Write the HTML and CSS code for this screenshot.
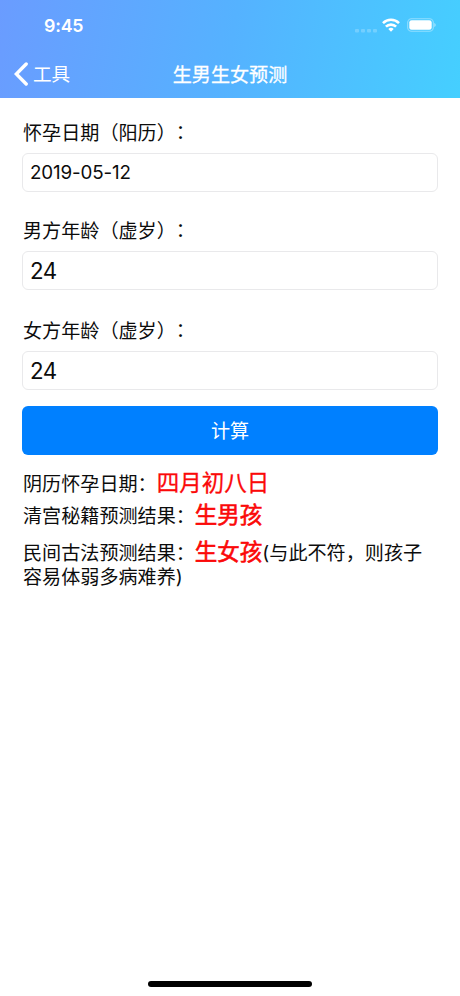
FILE: index.html
```html
<!DOCTYPE html>
<html lang="zh-CN">
<head>
<meta charset="utf-8">
<meta name="viewport" content="width=device-width">
<title>生男生女预测</title>
<link rel="stylesheet" href="styles.css">
</head>
<body>
<div class="screen">
  <header class="header">
    <div class="status">
      <span class="time">9:45</span>
      <div class="indicators">
        <svg class="signal" width="23" height="5" viewBox="0 0 23 5"><g fill="#fff" fill-opacity=".22"><rect x="0" y="1" width="4" height="3.5" rx="1"/><rect x="6" y="1" width="4" height="3.5" rx="1"/><rect x="12" y="1" width="4" height="3.5" rx="1"/><rect x="18" y="1" width="4" height="3.5" rx="1"/></g></svg>
        <svg class="wifi" width="18" height="14" viewBox="0 0 18 14"><g fill="none" stroke="#fff" stroke-width="2.6"><path d="M1 5.1a11.4 11.4 0 0 1 16 0"/><path d="M3.9 8.7a7.2 7.2 0 0 1 10.2 0"/></g><path d="M6.3 11a3.9 3.9 0 0 1 5.4 0L9 13.8z" fill="#fff"/></svg>
        <svg class="battery" width="29" height="14" viewBox="0 0 29 14"><rect x=".7" y=".7" width="25.6" height="12.6" rx="3.8" fill="none" stroke="#fff" stroke-opacity=".4" stroke-width="1.1"/><rect x="2.3" y="2.3" width="22.4" height="9.4" rx="2.3" fill="#fff"/><path d="M27.3 5v4q1.4-.6 1.4-2t-1.4-2" fill="#fff" fill-opacity=".5"/></svg>
      </div>
    </div>
    <nav class="nav">
      <a class="back"><svg width="14" height="24" viewBox="0 0 14 24"><path d="M12.2 2 2.3 12l9.9 10" fill="none" stroke="#fff" stroke-width="3.4" stroke-linecap="round"/></svg><span>工具</span></a>
      <h1 class="title">生男生女预测</h1>
    </nav>
  </header>
  <main class="content">
    <div class="field"><div class="label">怀孕日期（阳历）<span class="colon">：</span></div><div class="input date">2019-05-12</div></div>
    <div class="field"><div class="label">男方年龄（虚岁）<span class="colon">：</span></div><div class="input">24</div></div>
    <div class="field"><div class="label">女方年龄（虚岁）<span class="colon">：</span></div><div class="input">24</div></div>
    <div class="button">计算</div>
    <div class="results">
      <p class="result lunar">阴历怀孕日期：<span class="value">四月初八日</span></p>
      <p class="result palace">清宫秘籍预测结果：<span class="value bold">生男孩</span></p>
      <p class="result folk">民间古法预测结果：<span class="value bold">生女孩</span>(与此不符，则孩子<br>容易体弱多病难养)</p>
    </div>
  </main>
  <div class="home"></div>
</div>
</body>
</html>
```

FILE: styles.css
```css
* { box-sizing: border-box; margin: 0; padding: 0; }
body {
  background: #fff;
  color: #0c0c0c;
  font-family: Inter, "Noto Sans CJK SC", sans-serif;
  font-size: 19.1px;
  text-spacing-trim: space-all;
}
svg { display: block; }
.screen { width: 460px; height: 996px; display: flex; flex-direction: column; align-items: center; }
.header {
  width: 100%;
  height: 98px;
  background: linear-gradient(100deg, #6a9cff 0%, #55b2ff 50%, #45cfff 100%);
  color: #fff;
}
.status { height: 50px; padding: 0 24px 0 44px; display: flex; justify-content: space-between; align-items: center; }
.time { font-size: 17.8px; font-weight: 600; line-height: 24px; padding-top: 2px; letter-spacing: -.2px; }
.indicators { display: flex; align-items: center; }
.signal { margin: 10px 4px 0 0; }
.wifi { margin-right: 7px; }
.nav { height: 48px; display: grid; grid-template-columns: 1fr auto 1fr; align-items: center; }
.back { display: flex; align-items: center; gap: 5px; padding-left: 14px; font-size: 18.6px; line-height: 28px; }
.title { font-size: 19.1px; font-weight: 400; line-height: 28px; padding-top: 1px; -webkit-text-stroke: .3px #fff; }
.content { width: 100%; padding: 22px 22px 0 23px; flex: 1; }
.field { height: 99px; }
.field:first-child { height: 98px; }
.field:nth-child(3) { height: 88px; margin-top: 1px; }
.label { height: 26px; line-height: 26px; white-space: nowrap; }
.colon { position: relative; top: -1px; left: 0; }
.input {
  height: 39px;
  margin: 7px 0 0 -1px;
  padding-left: 7px;
  border: 1px solid #e9e9eb;
  border-radius: 6px;
  font-size: 22.3px;
  line-height: 37px;
  letter-spacing: -.5px;
}
.date { font-size: 18.8px; letter-spacing: -.15px; }
.button {
  height: 49px;
  margin-left: -1px;
  border-radius: 6px;
  background: #0080ff;
  color: #fff;
  line-height: 50px;
  text-align: center;
}
.results { padding-top: 13px; }
.result { line-height: 33px; white-space: nowrap; }
.palace { margin-top: -1px; }
.folk { padding-top: 7px; line-height: 24px; }
.value { color: #fb0909; font-size: 22.5px; line-height: 24px; -webkit-text-stroke: .3px #fb0909; }
.bold { -webkit-text-stroke-width: .6px; }
.home { width: 164px; height: 6px; margin-bottom: 9px; border-radius: 3px; background: #000; }
```
